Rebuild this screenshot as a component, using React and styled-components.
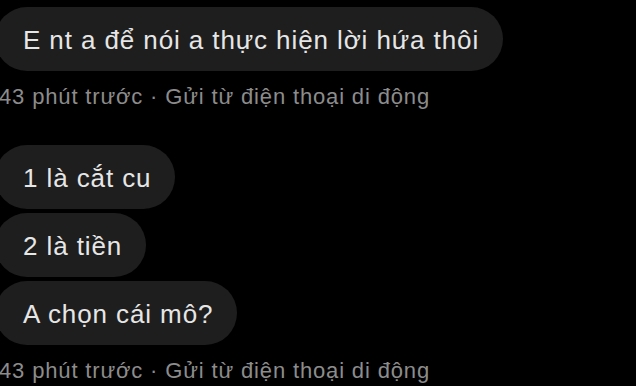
import React from "react";
import { styled, createGlobalStyle } from "styled-components";

const GlobalStyle = createGlobalStyle`
  html, body {
    margin: 0;
    padding: 0;
    background: #000;
    overflow: hidden;
  }
  body {
    font-family: "Liberation Sans", Arial, sans-serif;
    -webkit-font-smoothing: antialiased;
  }
`;

const groups = [
  {
    messages: ["E nt a để nói a thực hiện lời hứa thôi"],
    meta: "43 phút trước · Gửi từ điện thoại di động",
  },
  {
    messages: ["1 là cắt cu", "2 là tiền", "A chọn cái mô?"],
    meta: "43 phút trước · Gửi từ điện thoại di động",
  },
];

const App = () => {
  return (
    <>
      <GlobalStyle />
      <Thread>
        {groups.map((g, i) => (
          <Group key={i}>
            <Bubbles>
              {g.messages.map((m) => (
                <Bubble key={m}>{m}</Bubble>
              ))}
            </Bubbles>
            <Meta>{g.meta}</Meta>
          </Group>
        ))}
      </Thread>
    </>
  );
};

export default App;

const Thread = styled.div`
  display: flex;
  flex-direction: column;
  gap: 36px;
  width: 660px;
  margin-left: -5px;
  padding-top: 7px;
`;

const Group = styled.div`
  display: flex;
  flex-direction: column;
  align-items: flex-start;
`;

const Bubbles = styled.div`
  display: flex;
  flex-direction: column;
  align-items: flex-start;
  gap: 4px;
`;

const Bubble = styled.div`
  background: #1e1e1e;
  color: #e6e6e6;
  font-size: 26px;
  letter-spacing: 0.9px;
  line-height: 28px;
  padding: 19px 24px 17px 28px;
  border-radius: 32px;
  white-space: nowrap;
`;

const Meta = styled.div`
  color: #8c8c8c;
  font-size: 22px;
  letter-spacing: 0.85px;
  line-height: 24px;
  margin-top: 14px;
  margin-left: 4px;
  white-space: nowrap;
`;
